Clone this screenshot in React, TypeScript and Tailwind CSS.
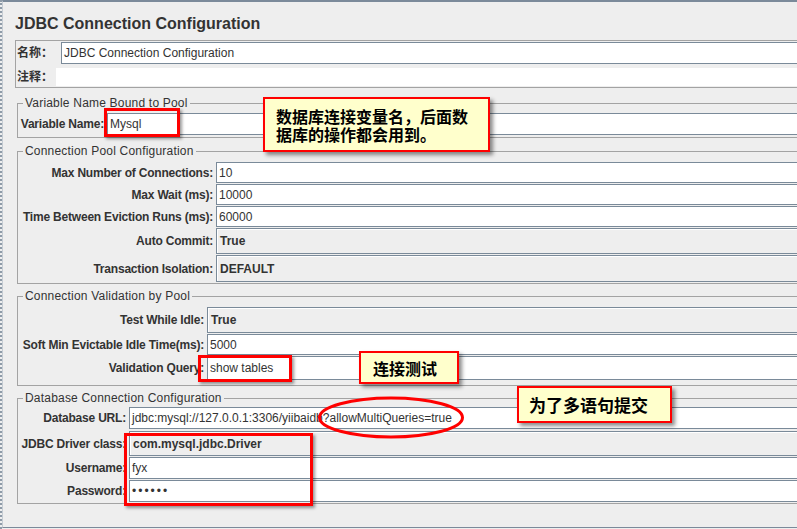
import type { ReactNode } from "react"

function Field({ value, className = "" }: { value?: string; className?: string }) {
  return (
    <div className={`flex flex-1 items-center bg-white border border-[#7a8a99] pl-[2px] text-[#333333] whitespace-nowrap ${className}`}>
      {value}
    </div>
  )
}

function Combo({ value, className = "" }: { value: string; className?: string }) {
  return (
    <div className={`flex flex-1 items-center bg-[#eeeeee] border border-[#7a8a99] shadow-[inset_1px_1px_0_#ffffff] pl-[3px] font-bold text-[#333333] whitespace-nowrap ${className}`}>
      {value}
    </div>
  )
}

function Row({ label, labelW, children }: { label: string; labelW: string; children: ReactNode }) {
  return (
    <div className="flex items-stretch">
      <div className={`${labelW} shrink-0 flex items-center justify-end pr-[3px] font-bold tracking-[-0.2px] text-[#333333] whitespace-nowrap`}>
        {label}
      </div>
      {children}
    </div>
  )
}

function Group({ title, className = "", children }: { title: string; className?: string; children: ReactNode }) {
  return (
    <fieldset className={`ml-[14px] min-w-0 border border-[#a3a3a3] ${className}`}>
      <legend className="ml-[5px] px-[2px] leading-[14px] text-[12px] tracking-[0.2px] text-[#333333]">{title}</legend>
      {children}
    </fieldset>
  )
}

function Note({ className, children }: { className: string; children: ReactNode }) {
  return (
    <div
      className={`absolute bg-[#ffffcc] border-2 border-[#ff0000] shadow-[3px_3px_4px_rgba(0,0,0,0.45)] font-bold text-black font-['Noto_Sans_CJK_SC',sans-serif] ${className}`}
    >
      {children}
    </div>
  )
}

export default function App() {
  return (
    <div className="relative w-[797px] h-[529px] overflow-hidden bg-[#eeeeee] font-['Liberation_Sans','Noto_Sans_CJK_SC',sans-serif] text-[12px]">
      <div className="h-full border-l-2 border-dotted border-[#8e9ba8]">
        <div className="h-[528px] w-[830px] border-t-2 border-b border-l border-[#7b8a9a] border-l-[#c5ccd3]">
          {/* Title */}
          <div className="pl-[12px] pt-[12px] h-[32px] text-[16px] leading-[20px] font-bold text-[#333333]">
            JDBC Connection Configuration
          </div>

          {/* Name / comments */}
          <div className="ml-[12px] mt-[6px] h-[48px] border border-[#a3a3a3]">
            <div className="flex items-stretch h-[22px] mt-[1px]">
              <div className="w-[45px] shrink-0 pl-[1px] flex items-center font-bold text-[#333333]">名称：</div>
              <Field value="JDBC Connection Configuration" />
            </div>
            <div className="flex items-stretch h-[18px] mt-[4px]">
              <div className="w-[40px] shrink-0 pl-[1px] flex items-center font-bold text-[#333333]">注释：</div>
              <div className="flex-1 bg-white" />
            </div>
          </div>

          <Group title="Variable Name Bound to Pool" className="mt-[8px] pt-[3px] pb-[2px]">
            <Row label="Variable Name:" labelW="w-[89px]">
              <Field value="Mysql" className="h-[22px]" />
            </Row>
          </Group>

          <Group title="Connection Pool Configuration" className="mt-[6px] pt-[4px] pb-[1px]">
            <div className="flex flex-col gap-[1px]">
              <Row label="Max Number of Connections:" labelW="w-[198px]">
                <Field value="10" className="h-[21px]" />
              </Row>
              <Row label="Max Wait (ms):" labelW="w-[198px]">
                <Field value="10000" className="h-[21px]" />
              </Row>
              <Row label="Time Between Eviction Runs (ms):" labelW="w-[198px]">
                <Field value="60000" className="h-[21px]" />
              </Row>
              <Row label="Auto Commit:" labelW="w-[198px]">
                <Combo value="True" className="h-[26px]" />
              </Row>
              <Row label="Transaction Isolation:" labelW="w-[198px]">
                <Combo value="DEFAULT" className="h-[27px]" />
              </Row>
            </div>
          </Group>

          <Group title="Connection Validation by Pool" className="mt-[5px] pt-[4px] pb-[5px]">
            <div className="flex flex-col gap-[1px]">
              <Row label="Test While Idle:" labelW="w-[189px]">
                <Combo value="True" className="h-[26px]" />
              </Row>
              <Row label="Soft Min Evictable Idle Time(ms):" labelW="w-[189px]">
                <Field value="5000" className="h-[21px]" />
              </Row>
              <Row label="Validation Query:" labelW="w-[189px]">
                <Field value="show tables" className="h-[24px]" />
              </Row>
            </div>
          </Group>

          <Group title="Database Connection Configuration" className="mt-[5px] pt-[2px] pb-[1px]">
            <div className="flex flex-col">
              <Row label="Database URL:" labelW="w-[111px]">
                <Field value="jdbc:mysql://127.0.0.1:3306/yiibaidb?allowMultiQueries=true" className="h-[22px]" />
              </Row>
              <div className="mt-[2px]">
                <Row label="JDBC Driver class:" labelW="w-[111px]">
                  <Combo value="com.mysql.jdbc.Driver" className="h-[25px]" />
                </Row>
              </div>
              <div className="mt-[1px]">
                <Row label="Username:" labelW="w-[111px]">
                  <Field value="fyx" className="h-[22px]" />
                </Row>
              </div>
              <div className="mt-[1px]">
                <Row label="Password:" labelW="w-[111px]">
                  <Field value="••••••" className="h-[22px] tracking-[2px]" />
                </Row>
              </div>
            </div>
          </Group>
        </div>
      </div>

      {/* Red highlight boxes */}
      <div className="absolute left-[104px] top-[108px] w-[76px] h-[29px] border-[3px] border-[#ff0000] shadow-[2px_2px_3px_rgba(0,0,0,0.4)]" />
      <div className="absolute left-[198px] top-[355px] w-[94px] h-[27px] border-[3px] border-[#ff0000] shadow-[2px_2px_3px_rgba(0,0,0,0.4)]" />
      <div className="absolute left-[124px] top-[433px] w-[189px] h-[73px] border-[3px] border-[#ff0000] shadow-[2px_2px_3px_rgba(0,0,0,0.4)]" />

      {/* Ellipse around query params */}
      <svg className="absolute left-[317px] top-[395px]" width="150" height="46" viewBox="0 0 150 46">
        <ellipse cx="74" cy="22.5" rx="71.5" ry="19.5" fill="none" stroke="#ff0000" strokeWidth="3" />
      </svg>

      {/* Notes */}
      <Note className="left-[263px] top-[97px] w-[227px] h-[55px] pl-[11px] flex flex-col justify-center text-[16px] leading-[18px]">
        <span>数据库连接变量名，后面数</span>
        <span>据库的操作都会用到。</span>
      </Note>
      <Note className="left-[359px] top-[351px] w-[100px] h-[33px] pl-[12px] flex items-center text-[16px] leading-[18px]">
        连接测试
      </Note>
      <Note className="left-[517px] top-[386px] w-[155px] h-[37px] pl-[10px] flex items-center text-[17px] leading-[18px]">
        为了多语句提交
      </Note>
    </div>
  )
}
